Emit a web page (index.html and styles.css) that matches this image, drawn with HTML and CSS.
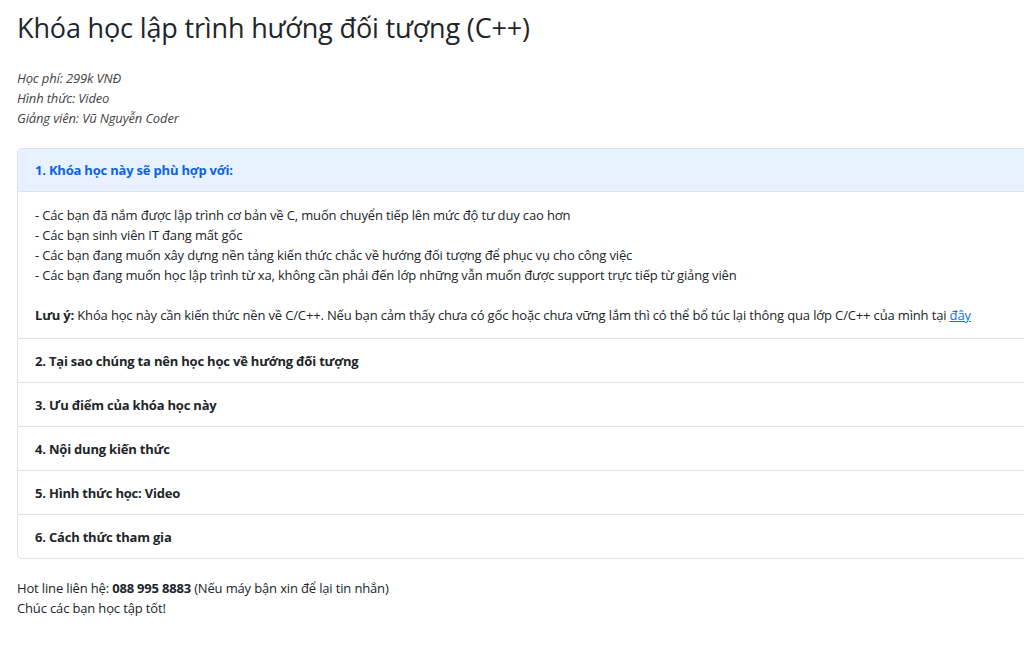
FILE: index.html
```html
<!DOCTYPE html>
<html lang="vi">
<head>
<meta charset="utf-8">
<title>Khóa học lập trình hướng đối tượng (C++)</title>
<link rel="stylesheet" href="styles.css">
</head>
<body>
<div class="page">
  <h1 class="title">Khóa học lập trình hướng đối tượng (C++)</h1>
  <p class="meta">
    <em>Học phí: 299k VNĐ</em><br>
    <em>Hình thức: Video</em><br>
    <em>Giảng viên: Vũ Nguyễn Coder</em>
  </p>
  <div class="accordion">
    <div class="acc-item">
      <div class="acc-button active">1. Khóa học này sẽ phù hợp với:</div>
      <div class="acc-body">
        - Các bạn đã nắm được lập trình cơ bản về C, muốn chuyển tiếp lên mức độ tư duy cao hơn<br>
        - Các bạn sinh viên IT đang mất gốc<br>
        - Các bạn đang muốn xây dựng nền tảng kiến thức chắc về hướng đối tượng để phục vụ cho công việc<br>
        - Các bạn đang muốn học lập trình từ xa, không cần phải đến lớp những vẫn muốn được support trực tiếp từ giảng viên<br>
        <br>
        <strong>Lưu ý:</strong> Khóa học này cần kiến thức nền về C/C++. Nếu bạn cảm thấy chưa có gốc hoặc chưa vững lắm thì có thể bổ túc lại thông qua lớp C/C++ của mình tại <a class="link" href="#">đây</a>
      </div>
    </div>
    <div class="acc-item"><div class="acc-button">2. Tại sao chúng ta nên học học về hướng đối tượng</div></div>
    <div class="acc-item"><div class="acc-button">3. Ưu điểm của khóa học này</div></div>
    <div class="acc-item"><div class="acc-button">4. Nội dung kiến thức</div></div>
    <div class="acc-item"><div class="acc-button">5. Hình thức học: Video</div></div>
    <div class="acc-item"><div class="acc-button">6. Cách thức tham gia</div></div>
  </div>
  <p class="footer">
    Hot line liên hệ: <strong>088 995 8883</strong> (Nếu máy bận xin để lại tin nhắn)<br>
    Chúc các bạn học tập tốt!
  </p>
</div>
</body>
</html>
```

FILE: styles.css
```css
html, body {
  margin: 0;
  padding: 0;
  background: #fff;
  overflow-x: hidden;
}
body {
  font-family: "Open Sans", "Noto Sans", sans-serif;
  font-size: 13px;
  line-height: 20px;
  letter-spacing: -0.15px;
  color: #212529;
}
strong {
  letter-spacing: -0.2px;
}
.page {
  padding: 11px 0 0 17px;
}
.title {
  margin: 0 0 23px 0;
  font-size: 27px;
  line-height: 34px;
  font-weight: 500;
  letter-spacing: -0.15px;
  color: #212529;
}
.meta {
  margin: 0 0 20px 0;
  color: #444;
}
.accordion {
  width: 1040px;
  border: 1px solid #dfe2e6;
  border-radius: 4px;
  background: #fff;
}
.acc-item + .acc-item {
  border-top: 1px solid #dfe2e6;
}
.acc-button {
  padding: 12px 17px 11px;
  font-weight: 700;
  letter-spacing: -0.2px;
  color: #212529;
}
.acc-button.active {
  padding: 11px 17px;
  background: #e7f1ff;
  color: #0c63e4;
  border-bottom: 1px solid #dfe2e6;
}
.acc-body {
  padding: 13px 17px 13px;
}
.link {
  color: #0d6efd;
  text-decoration: underline;
}
.footer {
  margin: 19px 0 0 0;
}
```
